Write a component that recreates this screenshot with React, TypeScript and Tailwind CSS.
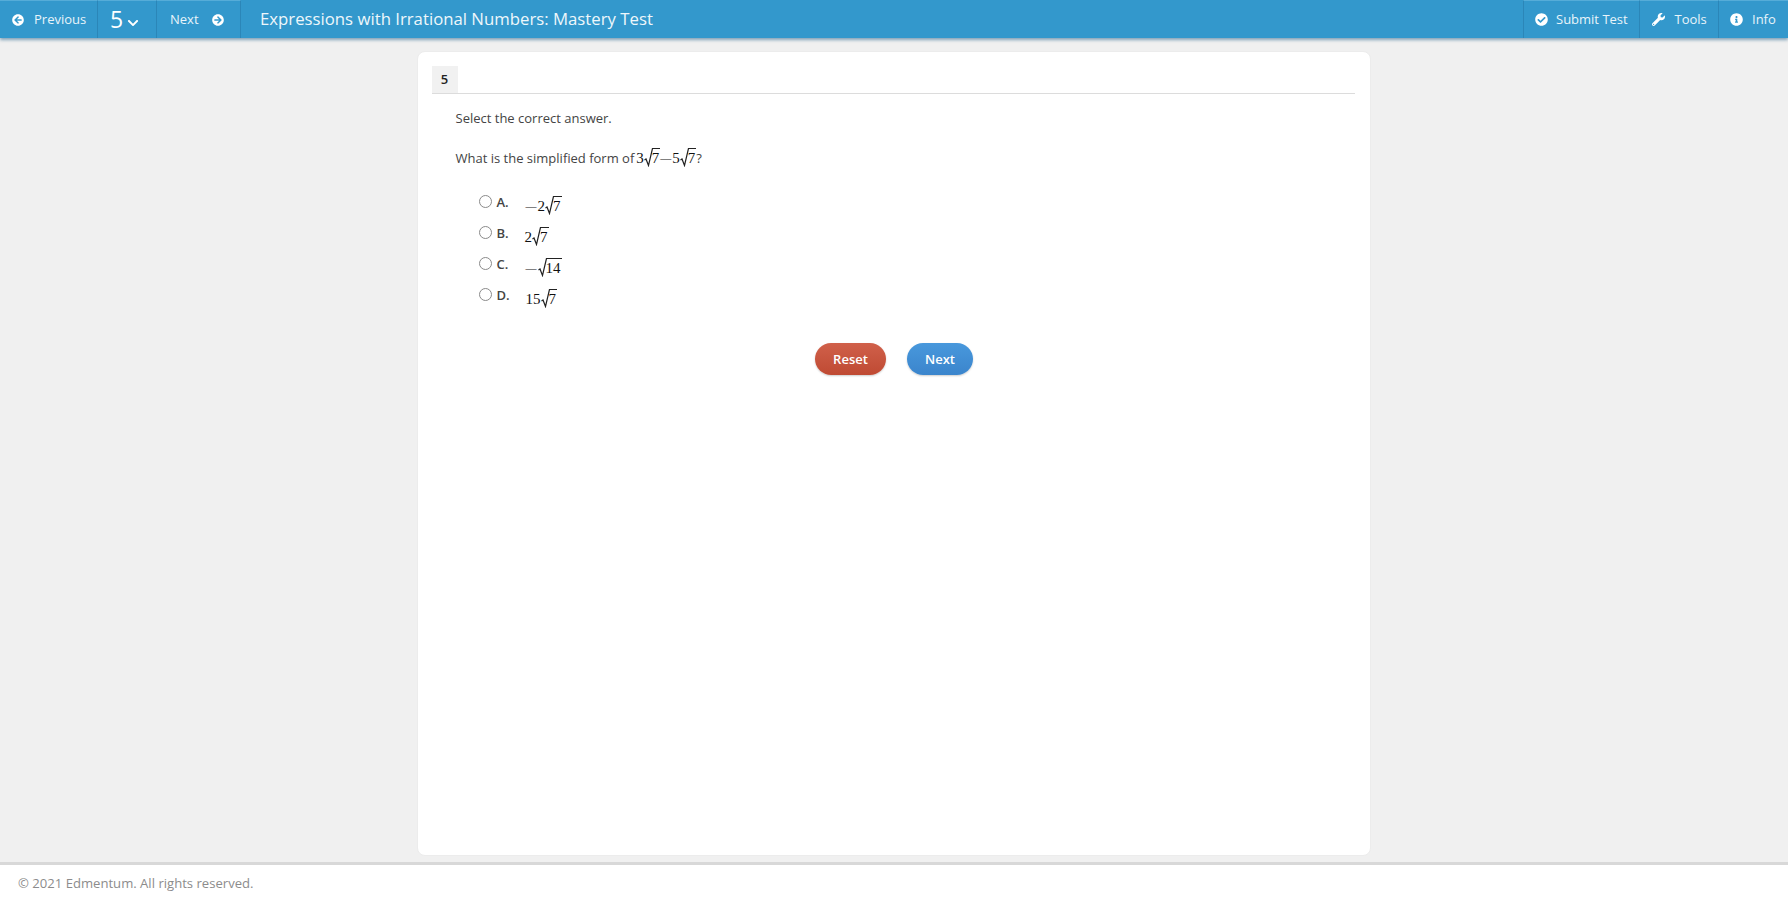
import type { ReactNode } from "react";
import {
  FaArrowCircleLeft,
  FaArrowCircleRight,
  FaCheckCircle,
  FaChevronDown,
  FaInfoCircle,
  FaWrench,
} from "react-icons/fa";

const OPEN_SANS = "font-['Open_Sans',sans-serif]";

function Sqrt({ children }: { children: ReactNode }) {
  return (
    <span className="inline-flex items-start align-baseline">
      <svg width="9" height="19" viewBox="0 0 9 19" className="-mr-px" fill="none" stroke="#222">
        <path d="M0.5 12 L2 11 L4.5 17.5 L8.5 0.5" strokeWidth="1.2" />
      </svg>
      <span className="border-t border-[#222] pr-px pt-px leading-[17px]">{children}</span>
    </span>
  );
}

function Math({ children, className = "" }: { children: ReactNode; className?: string }) {
  return (
    <span className={"inline-flex items-end font-['Liberation_Serif',serif] text-[15px] leading-[18px] text-[#111] " + className}>
      {children}
    </span>
  );
}

function Minus() {
  return <span className="mr-px mb-[2px] text-[11px] leading-[14px]">—</span>;
}

function BarItem({ children, className = "" }: { children: ReactNode; className?: string }) {
  return (
    <div className={"flex h-full items-center border-r border-[#2b86b8] border-t border-t-[#55acd8] " + className}>
      {children}
    </div>
  );
}

function Choice({ letter, children, mathPad }: { letter: string; children: ReactNode; mathPad: string }) {
  return (
    <div className="flex h-[31px] items-start">
      <span className="mt-[6px] h-[13px] w-[13px] shrink-0 rounded-full border border-[#8a8a8a] bg-white" />
      <span className="mt-[4px] ml-[5px] w-[16px] text-[13px] leading-[18px] font-semibold text-[#444]">{letter}.</span>
      <span className={"mt-[7px] " + mathPad}>{children}</span>
    </div>
  );
}

export default function App() {
  return (
    <div className={"flex h-[902px] flex-col overflow-hidden bg-[#f0f0f0] " + OPEN_SANS}>
      <header className="flex h-[38px] shrink-0 items-center justify-between bg-[#3398cc] text-white shadow-[0_2px_3px_rgba(40,100,140,0.55)]">
        <div className="flex h-full items-center">
          <BarItem className="w-[98px] pl-[12px] text-[13px]">
            <FaArrowCircleLeft className="mr-[10px] text-[12px]" />
            <span className="text-[#e8f4fa]">Previous</span>
          </BarItem>
          <BarItem className="w-[59px] pl-[12px]">
            <span className="text-[23px] leading-none font-normal">5</span>
            <FaChevronDown className="mt-[7px] ml-[4px] text-[12px]" />
          </BarItem>
          <BarItem className="w-[84px] pl-[13px] text-[13px]">
            <span className="text-[#e8f4fa]">Next</span>
            <FaArrowCircleRight className="ml-[13px] text-[12px]" />
          </BarItem>
          <h1 className="ml-[19px] text-[16.75px] leading-none font-normal text-[#eef7fb]">
            Expressions with Irrational Numbers: Mastery Test
          </h1>
        </div>
        <div className="flex h-full items-center">
          <BarItem className="w-[117px] border-l border-l-[#2b86b8] pl-[11px] text-[13px]">
            <FaCheckCircle className="mr-[8px] text-[13px]" />
            <span className="text-[#e8f4fa]">Submit Test</span>
          </BarItem>
          <BarItem className="w-[79px] pl-[12px] text-[13px]">
            <FaWrench className="mr-[9.5px] text-[13px]" />
            <span className="text-[#e8f4fa]">Tools</span>
          </BarItem>
          <div className="flex h-full w-[69px] items-center border-t border-t-[#55acd8] pl-[11px] text-[13px]">
            <FaInfoCircle className="mr-[9px] text-[13px]" />
            <span className="text-[#e8f4fa]">Info</span>
          </div>
        </div>
      </header>

      <main className="flex min-h-0 flex-1 justify-center pt-[13px] pr-[1px]">
        <section className="h-[805px] w-[954px] rounded-[8px] border border-[#ececec] bg-white pt-[14px] pr-[15px] pl-[14px]">
          <div className="flex h-[28px] border-b border-[#dcdcdc]">
            <span className="flex h-[27px] w-[26px] items-center justify-center bg-[#f1f1f1] text-[13px] font-semibold text-[#222]">5</span>
          </div>
          <div className="pt-[15px] pl-[24px] text-[13px] text-[#444]">
            <p className="leading-[18px]">Select the correct answer.</p>
            <p className="mt-[20px] flex h-[21px] items-center leading-[18px]">
              What is the simplified form of
              <Math className="ml-[2px]">
                3<Sqrt>7</Sqrt>
                <Minus />5<Sqrt>7</Sqrt>
              </Math>
              ?
            </p>
            <div className="mt-[21px] pl-[23px]">
              <Choice letter="A" mathPad="ml-[13px]">
                <Math>
                  <Minus />2<Sqrt>7</Sqrt>
                </Math>
              </Choice>
              <Choice letter="B" mathPad="ml-[12px]">
                <Math>
                  2<Sqrt>7</Sqrt>
                </Math>
              </Choice>
              <Choice letter="C" mathPad="ml-[13px]">
                <Math>
                  <Minus />
                  <Sqrt>14</Sqrt>
                </Math>
              </Choice>
              <Choice letter="D" mathPad="ml-[13px]">
                <Math>
                  15<Sqrt>7</Sqrt>
                </Math>
              </Choice>
            </div>
          </div>
          <div className="mt-[30px] flex justify-center gap-[21px] pl-[2px]">
            <button className="h-[32px] w-[71px] rounded-full bg-gradient-to-b from-[#d0604a] to-[#bf4a33] pt-px text-[13px] font-semibold text-white shadow-[0_1px_2px_rgba(0,0,0,0.2)]">
              Reset
            </button>
            <button className="h-[32px] w-[66px] rounded-full bg-gradient-to-b from-[#4898dc] to-[#3b85cc] pt-px text-[13px] font-semibold text-white shadow-[0_1px_2px_rgba(0,0,0,0.2)]">
              Next
            </button>
          </div>
        </section>
      </main>

      <footer className="flex h-[40px] shrink-0 items-center border-t-[3px] border-[#d8d8d8] bg-white pl-[18px] text-[13.1px] text-[#8c8c8c]">
        © 2021 Edmentum. All rights reserved.
      </footer>
    </div>
  );
}
